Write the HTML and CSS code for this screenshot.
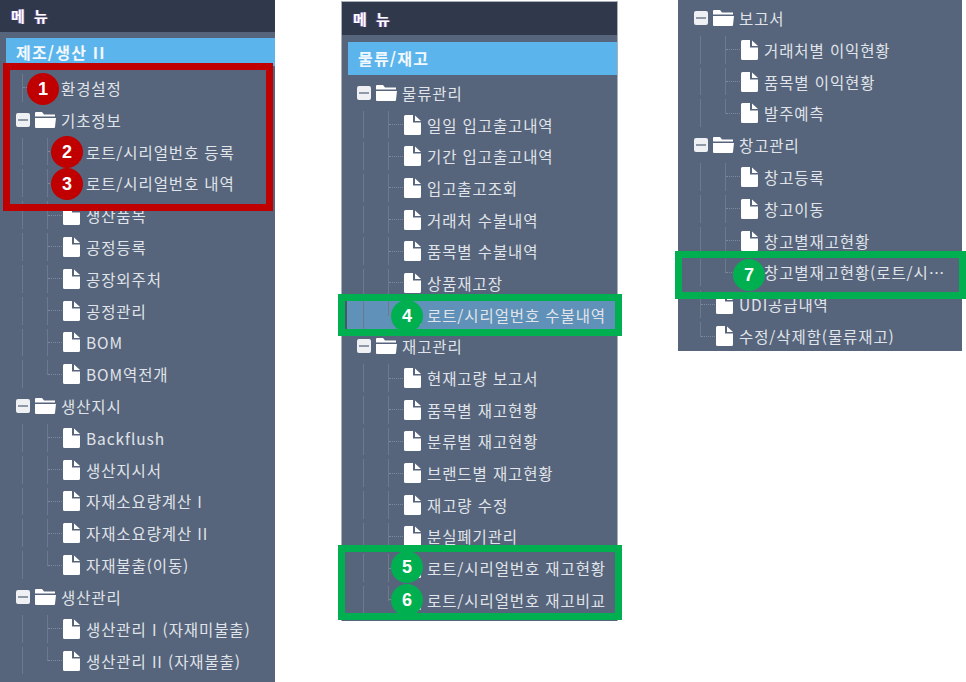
FILE: index.html
```html
<!DOCTYPE html>
<html lang="ko">
<head>
<meta charset="utf-8">
<title>메뉴</title>
<link rel="stylesheet" href="styles.css">
</head>
<body>
<svg class="defs" width="0" height="0" aria-hidden="true">
  <symbol id="file" viewBox="0 0 17 20"><path fill="#fff" d="M0 1.5 Q0 0 1.500 0 H9 V7.500 H17 V18.500 Q17 20 15.500 20 H1.500 Q0 20 0 18.500Z"/><path fill="#fff" d="M11 0.500 L17 6 H11Z"/></symbol>
  <symbol id="folder" viewBox="0 0 21 16"><path fill="#fff" d="M0 1 Q0 0 1 0 H7 L9 2.500 H20 V4.500 H0Z"/><path fill="#fff" d="M0 6 H21 L20 15 Q20 16 19 16 H1 Q0 16 0 15Z"/></symbol>
</svg>

<section class="panel p1">
  <header class="head">메 뉴</header>
  <div class="tab">제조/생산 II</div>
  <div class="tree">
    <div class="row"><i class="g"></i><i class="dots"></i><svg class="file"><use href="#file"/></svg><span>환경설정</span></div>
    <div class="row top"><b class="tog"></b><svg class="folder"><use href="#folder"/></svg><span>기초정보</span></div>
    <div class="row"><i class="g"></i><i class="g"></i><i class="dots"></i><svg class="file"><use href="#file"/></svg><span>로트/시리얼번호 등록</span></div>
    <div class="row"><i class="g"></i><i class="g"></i><i class="dots"></i><svg class="file"><use href="#file"/></svg><span>로트/시리얼번호 내역</span></div>
    <div class="row"><i class="g"></i><i class="g"></i><i class="dots"></i><svg class="file"><use href="#file"/></svg><span>생산품목</span></div>
    <div class="row"><i class="g"></i><i class="g"></i><i class="dots"></i><svg class="file"><use href="#file"/></svg><span>공정등록</span></div>
    <div class="row"><i class="g"></i><i class="g"></i><i class="dots"></i><svg class="file"><use href="#file"/></svg><span>공장외주처</span></div>
    <div class="row"><i class="g"></i><i class="g"></i><i class="dots"></i><svg class="file"><use href="#file"/></svg><span>공정관리</span></div>
    <div class="row"><i class="g"></i><i class="g"></i><i class="dots"></i><svg class="file"><use href="#file"/></svg><span>BOM</span></div>
    <div class="row"><i class="g"></i><i class="g end"></i><i class="dots"></i><svg class="file"><use href="#file"/></svg><span>BOM역전개</span></div>
    <div class="row top"><b class="tog"></b><svg class="folder"><use href="#folder"/></svg><span>생산지시</span></div>
    <div class="row"><i class="g"></i><i class="g"></i><i class="dots"></i><svg class="file"><use href="#file"/></svg><span>Backflush</span></div>
    <div class="row"><i class="g"></i><i class="g"></i><i class="dots"></i><svg class="file"><use href="#file"/></svg><span>생산지시서</span></div>
    <div class="row"><i class="g"></i><i class="g"></i><i class="dots"></i><svg class="file"><use href="#file"/></svg><span>자재소요량계산 I</span></div>
    <div class="row"><i class="g"></i><i class="g"></i><i class="dots"></i><svg class="file"><use href="#file"/></svg><span>자재소요량계산 II</span></div>
    <div class="row"><i class="g"></i><i class="g end"></i><i class="dots"></i><svg class="file"><use href="#file"/></svg><span>자재불출(이동)</span></div>
    <div class="row top"><b class="tog"></b><svg class="folder"><use href="#folder"/></svg><span>생산관리</span></div>
    <div class="row"><i class="g"></i><i class="g"></i><i class="dots"></i><svg class="file"><use href="#file"/></svg><span>생산관리 I (자재미불출)</span></div>
    <div class="row"><i class="g"></i><i class="g end"></i><i class="dots"></i><svg class="file"><use href="#file"/></svg><span>생산관리 II (자재불출)</span></div>
  </div>
</section>

<section class="panel p2">
  <header class="head">메 뉴</header>
  <div class="tab">물류/재고</div>
  <div class="tree">
    <div class="row top"><b class="tog"></b><svg class="folder"><use href="#folder"/></svg><span>물류관리</span></div>
    <div class="row"><i class="g"></i><i class="g"></i><i class="dots"></i><svg class="file"><use href="#file"/></svg><span>일일 입고출고내역</span></div>
    <div class="row"><i class="g"></i><i class="g"></i><i class="dots"></i><svg class="file"><use href="#file"/></svg><span>기간 입고출고내역</span></div>
    <div class="row"><i class="g"></i><i class="g"></i><i class="dots"></i><svg class="file"><use href="#file"/></svg><span>입고출고조회</span></div>
    <div class="row"><i class="g"></i><i class="g"></i><i class="dots"></i><svg class="file"><use href="#file"/></svg><span>거래처 수불내역</span></div>
    <div class="row"><i class="g"></i><i class="g"></i><i class="dots"></i><svg class="file"><use href="#file"/></svg><span>품목별 수불내역</span></div>
    <div class="row"><i class="g"></i><i class="g"></i><i class="dots"></i><svg class="file"><use href="#file"/></svg><span>상품재고장</span></div>
    <div class="row sel"><i class="g"></i><i class="g end"></i><i class="dots"></i><svg class="file"><use href="#file"/></svg><span>로트/시리얼번호 수불내역</span></div>
    <div class="row top"><b class="tog"></b><svg class="folder"><use href="#folder"/></svg><span>재고관리</span></div>
    <div class="row"><i class="g"></i><i class="g"></i><i class="dots"></i><svg class="file"><use href="#file"/></svg><span>현재고량 보고서</span></div>
    <div class="row"><i class="g"></i><i class="g"></i><i class="dots"></i><svg class="file"><use href="#file"/></svg><span>품목별 재고현황</span></div>
    <div class="row"><i class="g"></i><i class="g"></i><i class="dots"></i><svg class="file"><use href="#file"/></svg><span>분류별 재고현황</span></div>
    <div class="row"><i class="g"></i><i class="g"></i><i class="dots"></i><svg class="file"><use href="#file"/></svg><span>브랜드별 재고현황</span></div>
    <div class="row"><i class="g"></i><i class="g"></i><i class="dots"></i><svg class="file"><use href="#file"/></svg><span>재고량 수정</span></div>
    <div class="row"><i class="g"></i><i class="g"></i><i class="dots"></i><svg class="file"><use href="#file"/></svg><span>분실폐기관리</span></div>
    <div class="row"><i class="g"></i><i class="g"></i><i class="dots"></i><svg class="file"><use href="#file"/></svg><span>로트/시리얼번호 재고현황</span></div>
    <div class="row"><i class="g"></i><i class="g end"></i><i class="dots"></i><svg class="file"><use href="#file"/></svg><span>로트/시리얼번호 재고비교</span></div>
  </div>
</section>

<section class="panel p3">
  <div class="tree">
    <div class="row top"><b class="tog"></b><svg class="folder"><use href="#folder"/></svg><span>보고서</span></div>
    <div class="row"><i class="g"></i><i class="g"></i><i class="dots"></i><svg class="file"><use href="#file"/></svg><span>거래처별 이익현황</span></div>
    <div class="row"><i class="g"></i><i class="g"></i><i class="dots"></i><svg class="file"><use href="#file"/></svg><span>품목별 이익현황</span></div>
    <div class="row"><i class="g"></i><i class="g end"></i><i class="dots"></i><svg class="file"><use href="#file"/></svg><span>발주예측</span></div>
    <div class="row top"><b class="tog"></b><svg class="folder"><use href="#folder"/></svg><span>창고관리</span></div>
    <div class="row"><i class="g"></i><i class="g"></i><i class="dots"></i><svg class="file"><use href="#file"/></svg><span>창고등록</span></div>
    <div class="row"><i class="g"></i><i class="g"></i><i class="dots"></i><svg class="file"><use href="#file"/></svg><span>창고이동</span></div>
    <div class="row"><i class="g"></i><i class="g"></i><i class="dots"></i><svg class="file"><use href="#file"/></svg><span>창고별재고현황</span></div>
    <div class="row"><i class="g"></i><i class="g end"></i><i class="dots"></i><svg class="file"><use href="#file"/></svg><span>창고별재고현황(로트/시…</span></div>
    <div class="row"><i class="g"></i><i class="dots"></i><svg class="file"><use href="#file"/></svg><span>UDI공급내역</span></div>
    <div class="row"><i class="g end"></i><i class="dots"></i><svg class="file"><use href="#file"/></svg><span>수정/삭제함(물류재고)</span></div>
  </div>
</section>

<div class="box red b1"></div>
<div class="box green b2"></div>
<div class="box green b3"></div>
<div class="box green b4"></div>
<div class="pin rd n1">1</div>
<div class="pin rd n2">2</div>
<div class="pin rd n3">3</div>
<div class="pin gr n4">4</div>
<div class="pin gr n5">5</div>
<div class="pin gr n6">6</div>
<div class="pin gr n7">7</div>
</body>
</html>
```
FILE: styles.css
```css
html, body { margin: 0; padding: 0; background: #fff; }
body {
  position: relative;
  width: 966px;
  height: 682px;
  overflow: hidden;
  font-family: "Noto Sans CJK KR", "Noto Sans", sans-serif;
}
.defs { position: absolute; }

.panel { position: absolute; background: #56657b; overflow: hidden; color: #e0e4ea; box-sizing: border-box; }
.p1 { left: 0; top: 0; width: 275px; height: 682px; }
.p2 { left: 341px; top: 1px; width: 277px; height: 620px; border: 1px solid #a9b0ba; border-bottom: 0; }
.p3 { left: 678px; top: 0; width: 284px; height: 351px; }

.head {
  height: 32px;
  background: #30384b;
  color: #fff;
  font-size: 15px;
  font-weight: 700;
  line-height: 31px;
  padding-left: 11px;
  letter-spacing: 2.5px;
  white-space: pre;
  text-shadow: -1px 0 rgba(240, 130, 240, .45), 1px 0 rgba(110, 120, 240, .45);
}
.tab {
  margin: 6px 0 0 6px;
  height: 28px;
  background: #5bb5ec;
  color: #f2f8fd;
  font-size: 16px;
  font-weight: 700;
  line-height: 29px;
  padding-left: 10px;
  letter-spacing: 1.2px;
}
.p2 .head { height: 33px; line-height: 33px; }
.p2 .tab { margin-top: 7px; height: 33px; line-height: 33px; }
.p1 .tree { padding-top: 6px; }
.p2 .tree { padding-top: 2px; }
.p3 .tree { padding-top: 2px; }

.row {
  display: flex;
  align-items: center;
  height: 31.82px;
  padding-left: 22px;
  font-size: 15.500px;
  letter-spacing: .9px;
  white-space: nowrap;
}
.p2 .row { height: 31.7px; padding-left: 21px; }
.row span { margin-left: 6px; }
.row.top { padding-left: 16px; }
.p2 .row.top { padding-left: 15px; }
.row.top span { margin-left: 5px; }

.g {
  flex: none;
  align-self: stretch;
  width: 24px;
  margin: 2px 0;
  border-left: 1px solid #6d7a8c;
}
.g + .dots { margin-left: -24px; }
.g.end { margin-bottom: 15px; }
.dots {
  flex: none;
  width: 14px;
  border-top: 1px dotted #7e8a9b;
}
.file { flex: none; width: 17px; height: 20px; margin-left: 1px; }
.folder { flex: none; width: 21px; height: 16px; margin-left: 5px; }
.tog {
  flex: none;
  box-sizing: border-box;
  width: 14px;
  height: 14px;
  background: #eef0f3;
  border-radius: 2px;
  position: relative;
}
.tog::before {
  content: "";
  position: absolute;
  left: 6px;
  top: -9px;
  bottom: -9px;
  width: 1px;
  background: #6d7a8c;
  z-index: -1;
}
.tog::after {
  content: "";
  position: absolute;
  left: 2px;
  right: 2px;
  top: 6px;
  height: 2px;
  background: #8e98a6;
}
.p2 .row.sel { background: #6091b8; margin-left: 3px; margin-right: 2px; padding-left: 16px; border-left: 2px solid #4a566a; box-sizing: border-box; }

.box { position: absolute; box-sizing: border-box; border: 7px solid; }
.red { border-color: #c00000; }
.green { border-color: #00b050; }
.b1 { left: 3px; top: 63px; width: 270px; height: 148px; }
.b2 { left: 338px; top: 294px; width: 284px; height: 42px; }
.b3 { left: 338px; top: 545px; width: 284px; height: 75px; }
.b4 { left: 675px; top: 251px; width: 291px; height: 48px; }

.pin {
  position: absolute;
  width: 32px;
  height: 32px;
  border-radius: 50%;
  color: #fff;
  font-family: "Liberation Sans", sans-serif;
  font-size: 18px;
  font-weight: 700;
  line-height: 32px;
  text-align: center;
}
.rd { background: #c00000; }
.gr { background: #00b050; }
.n1 { left: 27px; top: 73px; }
.n2 { left: 51px; top: 136px; }
.n3 { left: 51px; top: 168px; }
.n4 { left: 391px; top: 300px; }
.n5 { left: 391px; top: 551px; }
.n6 { left: 391px; top: 584px; }
.n7 { left: 733px; top: 259px; }
```
